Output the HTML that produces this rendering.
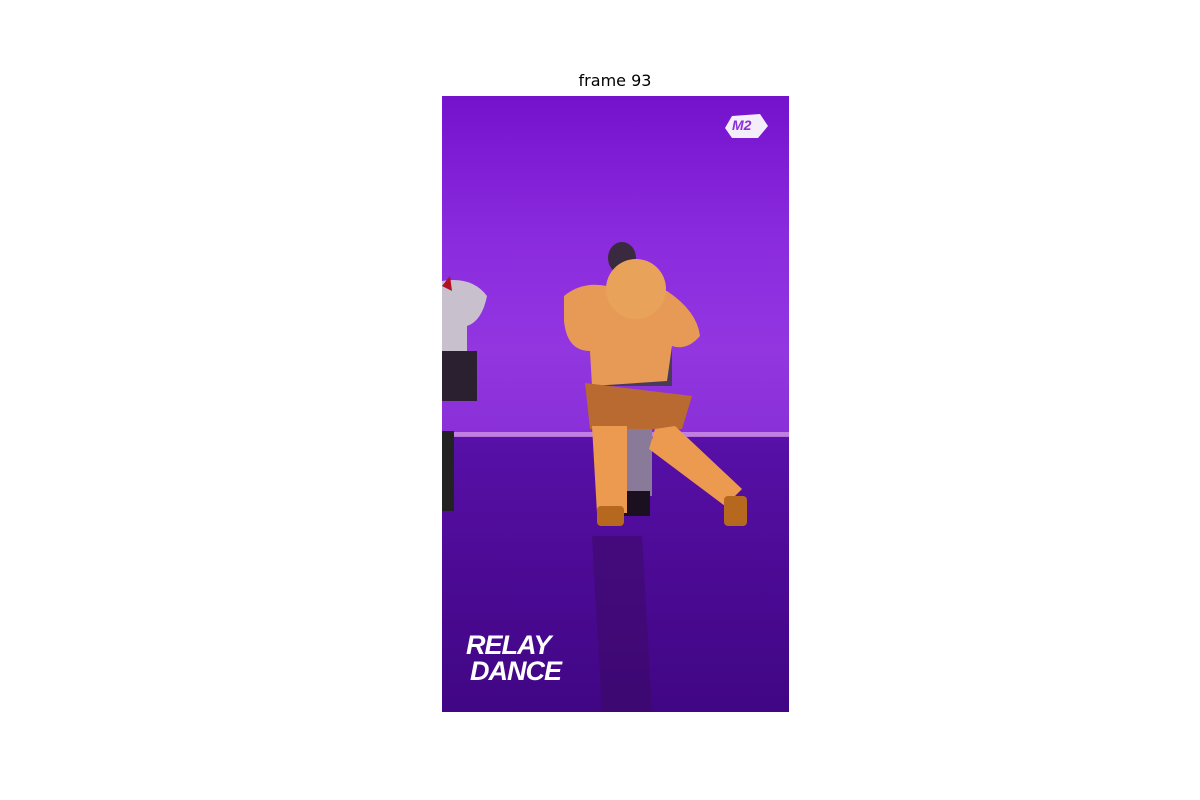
<!DOCTYPE html>
<html><head><style>
body{margin:0;width:1200px;height:800px;background:#fff;position:relative;overflow:hidden;font-family:"DejaVu Sans","Liberation Sans",sans-serif}
.t{position:absolute;top:71px;left:0;width:1230px;text-align:center;font-size:16px;color:#000}
svg{position:absolute;left:442px;top:96px}
</style></head><body>
<div class="t">frame 93</div>
<svg width="347" height="616" viewBox="0 0 347 616">
<defs>
<linearGradient id="bg" x1="0" y1="0" x2="0" y2="1">
<stop offset="0" stop-color="#7412cc"/><stop offset="0.4" stop-color="#8a2ade"/><stop offset="0.75" stop-color="#9236e0"/><stop offset="1" stop-color="#8a30d8"/></linearGradient>
<linearGradient id="fl" x1="0" y1="0" x2="0" y2="1">
<stop offset="0" stop-color="#5810a8"/><stop offset="0.5" stop-color="#4c0a94"/><stop offset="1" stop-color="#400684"/></linearGradient>
</defs>
<rect width="347" height="340" fill="url(#bg)"/>
<rect y="340" width="347" height="276" fill="url(#fl)"/>
<rect y="336" width="347" height="5" fill="#d8a0e8" opacity="0.7"/>
<ellipse cx="180" cy="162" rx="14" ry="16" fill="#3a2a40"/>
<rect x="150" y="230" width="80" height="60" fill="#4a3a5a"/>
<rect x="178" y="330" width="32" height="70" fill="#8a7a9a"/>
<rect x="180" y="395" width="28" height="25" fill="#1a1020"/>
<path d="M0 185 Q30 180 45 200 Q40 225 25 230 L25 260 L0 260Z" fill="#c8c0cc"/>
<rect x="0" y="255" width="35" height="50" fill="#2a2030"/>
<rect x="0" y="335" width="12" height="80" fill="#222"/>
<path d="M0 190 L8 180 L10 195Z" fill="#b01020"/>
<g>
<path d="M122 200 Q140 185 165 190 L225 195 Q255 215 258 240 Q245 255 230 250 L225 285 L150 290 L148 255 Q125 255 122 225Z" fill="#e69a55"/>
<ellipse cx="194" cy="193" rx="30" ry="30" fill="#e9a25a"/>
<path d="M143 287 L250 300 L240 333 L148 333Z" fill="#b86a30"/>
<path d="M150 330 L185 330 L185 417 L155 417Z" fill="#ec9a50"/>
<path d="M213 333 L233 330 L300 393 L283 410 L207 353Z" fill="#ec9a50"/>
<rect x="155" y="410" width="27" height="20" rx="4" fill="#b5681e"/>
<rect x="282" y="400" width="23" height="30" rx="4" fill="#b5681e"/>
</g>
<path d="M150 440 L200 440 L210 616 L160 616Z" fill="#3a0a60" opacity="0.5"/>
<path d="M290 20 L318 18 L326 30 L316 42 L290 42 L283 32Z" fill="#f4eefa"/>
<text x="290" y="34" font-family="Liberation Sans" font-style="italic" font-weight="bold" font-size="14" fill="#8a30d8">M2</text>
<text x="24" y="558" font-family="Liberation Sans" font-style="italic" font-weight="bold" font-size="27" fill="#fff" letter-spacing="-1">RELAY</text>
<text x="28" y="584" font-family="Liberation Sans" font-style="italic" font-weight="bold" font-size="27" fill="#fff" letter-spacing="-1">DANCE</text>
</svg>
</body></html>
